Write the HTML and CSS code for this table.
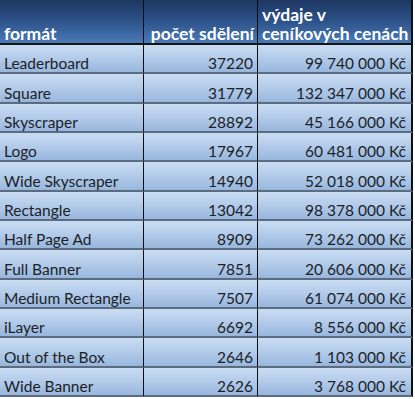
FILE: index.html
```html
<!DOCTYPE html>
<html>
<head>
<meta charset="utf-8">
<link rel="stylesheet" href="styles.css">
</head>
<body>
<div class="sheet">
  <div class="hd">formát</div>
  <div class="hd num">počet sdělení</div>
  <div class="hd num last">výdaje v<br>ceníkových cenách</div>

  <div class="c">Leaderboard</div><div class="c num">37220</div><div class="c num last">99 740 000 Kč</div>
  <div class="c">Square</div><div class="c num">31779</div><div class="c num last">132 347 000 Kč</div>
  <div class="c">Skyscraper</div><div class="c num">28892</div><div class="c num last">45 166 000 Kč</div>
  <div class="c">Logo</div><div class="c num">17967</div><div class="c num last">60 481 000 Kč</div>
  <div class="c">Wide Skyscraper</div><div class="c num">14940</div><div class="c num last">52 018 000 Kč</div>
  <div class="c">Rectangle</div><div class="c num">13042</div><div class="c num last">98 378 000 Kč</div>
  <div class="c">Half Page Ad</div><div class="c num">8909</div><div class="c num last">73 262 000 Kč</div>
  <div class="c">Full Banner</div><div class="c num">7851</div><div class="c num last">20 606 000 Kč</div>
  <div class="c">Medium Rectangle</div><div class="c num">7507</div><div class="c num last">61 074 000 Kč</div>
  <div class="c">iLayer</div><div class="c num">6692</div><div class="c num last">8 556 000 Kč</div>
  <div class="c">Out of the Box</div><div class="c num">2646</div><div class="c num last">1 103 000 Kč</div>
  <div class="c">Wide Banner</div><div class="c num">2626</div><div class="c num last">3 768 000 Kč</div>
</div>
</body>
</html>
```
FILE: styles.css
```css
html, body {
  margin: 0;
  padding: 0;
  background: #ffffff;
}
.sheet {
  display: grid;
  grid-template-columns: 144px 114px 155px;
  grid-template-rows: 45px repeat(12, 29.33px);
  width: 413px;
  font-family: "Lato", "Open Sans", sans-serif;
  font-size: 15.5px;
}
.hd {
  background: linear-gradient(to bottom, #1d3760 0%, #2b4f86 45%, #4a7ab8 100%);
  color: #ffffff;
  font-weight: bold;
  font-size: 17.5px;
  display: flex;
  align-items: flex-end;
  padding: 0 3px 0 4px;
  line-height: 19px;
  border-right: 1px solid #101010;
  border-bottom: 2px solid #141414;
  box-sizing: border-box;
  white-space: nowrap;
}
.hd.num {
  justify-content: flex-end;
  text-align: left;
}
.hd.last {
  justify-content: flex-start;
  padding-left: 4px;
}
.c {
  background: linear-gradient(to bottom, #c9dcf2 0%, #b3cbea 50%, #98b6dd 100%);
  color: #1b1f26;
  display: flex;
  align-items: flex-end;
  padding: 0 4px 0 4px;
  line-height: 17px;
  border-right: 1px solid #101010;
  border-bottom: 2px solid #5b6b80;
  box-sizing: border-box;
  white-space: nowrap;
}
.num {
  justify-content: flex-end;
}
.last {
  border-right: 2px solid #101010;
  padding-right: 5px;
}
```
